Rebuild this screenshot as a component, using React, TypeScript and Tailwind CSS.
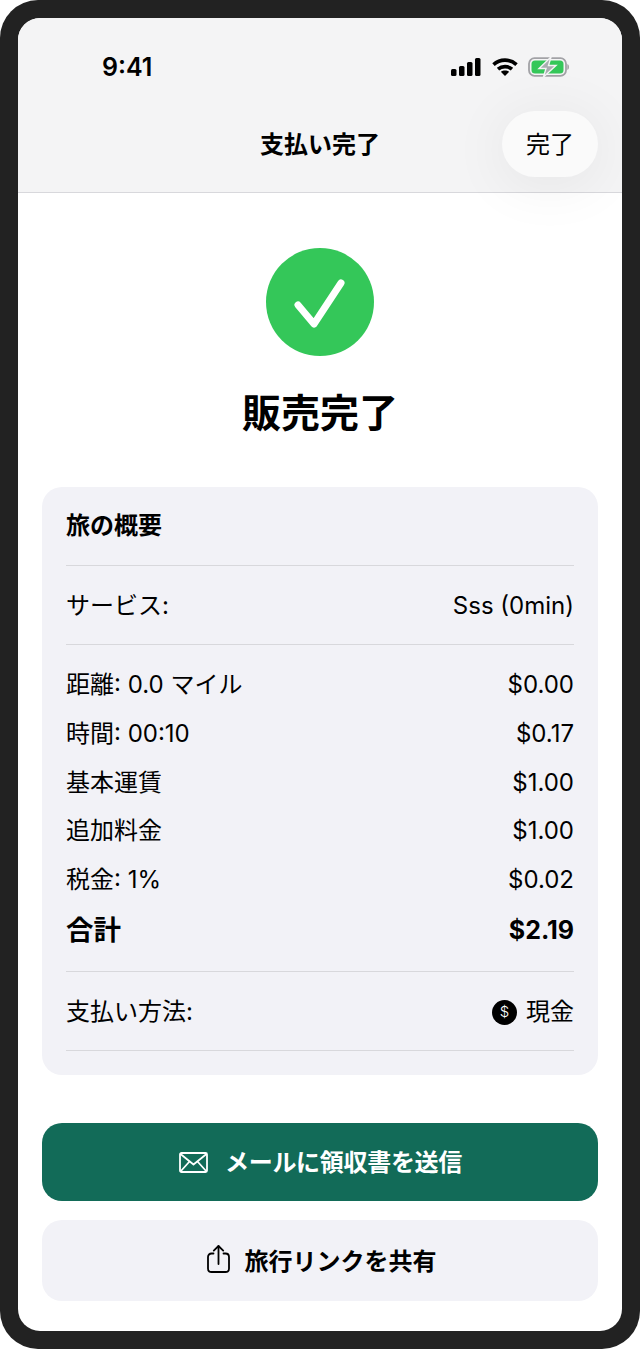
const fontStack = "font-['Inter','Noto_Sans_CJK_JP',sans-serif]"

const fareRows = [
  { label: '距離: 0.0 マイル', value: '$0.00' },
  { label: '時間: 00:10', value: '$0.17' },
  { label: '基本運賃', value: '$1.00' },
  { label: '追加料金', value: '$1.00' },
  { label: '税金: 1%', value: '$0.02' },
]

function StatusIcons() {
  return (
    <div className="flex items-center gap-[10.5px]">
      <svg width="30" height="18" viewBox="0 0 30 18" fill="#000">
        <rect x="0" y="11" width="5.5" height="7" rx="1.5" />
        <rect x="8" y="8" width="5.5" height="10" rx="1.5" />
        <rect x="16" y="4" width="5.5" height="14" rx="1.5" />
        <rect x="24" y="0" width="5.5" height="18" rx="1.5" />
      </svg>
      <svg width="26" height="18" viewBox="0 0 26 18" fill="none" stroke="#000" strokeWidth="3.6">
        <path d="M1.5 6.6C8 .6 18 .6 24.5 6.6" />
        <path d="M6 11.2C10 7.8 16 7.8 20 11.2" />
        <path d="M13 18L8.8 13.8C11.2 12 14.8 12 17.2 13.8Z" fill="#000" stroke="none" />
      </svg>
      <svg width="41" height="20" viewBox="0 0 41 20">
        <rect x="1" y="1.2" width="37" height="17.6" rx="5.5" fill="none" stroke="#a2a2a6" strokeWidth="1.8" />
        <rect x="3.5" y="3.6" width="32" height="12.8" rx="3.5" fill="#34c759" />
        <path d="M39.3 7c1.1.4 1.7 1.5 1.7 3s-.6 2.6-1.7 3z" fill="#a2a2a6" />
        <path d="M23 0L11 11.5H18L15.5 20L28 8.5H20.5Z" fill="#a9adb0" stroke="#f4f4f5" strokeWidth="1.4" />
      </svg>
    </div>
  )
}

function ShareIcon() {
  return (
    <svg width="23" height="28" viewBox="0 0 23 28" fill="none" stroke="#000" strokeWidth="1.8" strokeLinecap="round" strokeLinejoin="round">
      <path d="M6.5 8.5H4.5C2.5 8.5 1 10 1 12V23.5C1 25.5 2.5 27 4.5 27H18.5C20.5 27 22 25.5 22 23.5V12C22 10 20.5 8.5 18.5 8.5H16.5" />
      <path d="M11.5 19V1.2" />
      <path d="M6.8 5.6L11.5 1L16.2 5.6" />
    </svg>
  )
}

function Row({ label, value }: { label: string; value: string }) {
  return (
    <div className="flex h-[48.7px] items-center justify-between pt-[2px] text-[24px] leading-none text-black">
      <span>{label}</span>
      <span>{value}</span>
    </div>
  )
}

export default function App() {
  return (
    <div className={`h-[1349px] w-[640px] overflow-hidden rounded-[38px] bg-[#222222] p-[18px] ${fontStack}`}>
      <div className="flex h-[1313px] flex-col overflow-hidden rounded-[22px] bg-white">
        <header className="h-[175px] shrink-0 border-b border-[#d8d8dc] bg-[#f4f4f5]">
          <div className="flex h-[93px] items-center justify-between pl-[84px] pr-[53px] pt-[5px]">
            <span className="text-[25px] font-semibold leading-[30px] text-black">9:41</span>
            <StatusIcons />
          </div>
          <div className="relative flex h-[66px] items-center justify-center pt-[2px]">
            <h1 className="text-[24px] font-semibold text-black">支払い完了</h1>
            <button className="absolute right-[24px] top-0 h-[66px] w-[96px] rounded-[33px] bg-[#fafafa] pt-[2px] text-[24px] text-black shadow-[0_6px_60px_rgba(0,0,0,0.07)]">
              完了
            </button>
          </div>
        </header>

        <main className="flex flex-1 flex-col px-[24px]">
          <div className="flex flex-col items-center pt-[55px]">
            <div className="flex h-[108px] w-[108px] items-center justify-center rounded-full bg-[#34c759]">
              <svg width="54" height="54" viewBox="0 0 54 54" fill="none" stroke="#fff" strokeWidth="7" strokeLinecap="round" strokeLinejoin="round">
                <path d="M5 30L21 49L48 8" />
              </svg>
            </div>
            <h2 className="mt-[31px] text-[39px] font-bold leading-[52px] text-black">販売完了</h2>
          </div>

          <section className="mt-[48px] h-[588px] rounded-[20px] bg-[#f2f2f7] px-[24px]">
            <div className="flex h-[79px] items-center border-b border-[#d8d8dc] text-[24px] font-semibold text-black">旅の概要</div>
            <div className="flex h-[79px] items-center justify-between border-b border-[#d8d8dc] pt-[2px] text-[24px] text-black">
              <span>サービス:</span>
              <span>Sss (0min)</span>
            </div>
            <div className="border-b border-[#d8d8dc] pb-[14px] pt-[15px]">
              {fareRows.map((row) => (
                <Row key={row.label} label={row.label} value={row.value} />
              ))}
              <div className="flex h-[54px] items-center justify-between text-black">
                <span className="text-[27.5px] font-bold">合計</span>
                <span className="text-[25px] font-bold">$2.19</span>
              </div>
            </div>
            <div className="flex h-[79px] items-center justify-between border-b border-[#d8d8dc] pt-[2px] text-[24px] text-black">
              <span>支払い方法:</span>
              <span className="flex items-center gap-[9px]">
                <span className="flex h-[25px] w-[25px] items-center justify-center rounded-full bg-black text-[15px] font-light text-white">$</span>
                現金
              </span>
            </div>
          </section>

          <button className="mt-[48px] flex h-[78px] items-center justify-center gap-[17px] rounded-[20px] bg-[#126b58] pl-[1px] pt-[2px] text-[24px] font-semibold tracking-[-0.3px] text-white">
            <svg width="29" height="21" viewBox="0 0 29 21" fill="none" stroke="#fff" strokeWidth="1.8" strokeLinejoin="round" className="-mt-[2px]">
              <rect x="1" y="1" width="27" height="19" rx="1.5" />
              <path d="M1.5 2L14.5 12.5L27.5 2" />
              <path d="M1.5 19.5L10.5 9.5M27.5 19.5L18.5 9.5" />
            </svg>
            メールに領収書を送信
          </button>
          <button className="mt-[19px] flex h-[81px] items-center justify-center gap-[15px] rounded-[20px] bg-[#f2f2f7] pl-[3px] pt-[2px] text-[24px] font-semibold text-black">
            <span className="-mt-[5px]">
              <ShareIcon />
            </span>
            旅行リンクを共有
          </button>
        </main>
      </div>
    </div>
  )
}
